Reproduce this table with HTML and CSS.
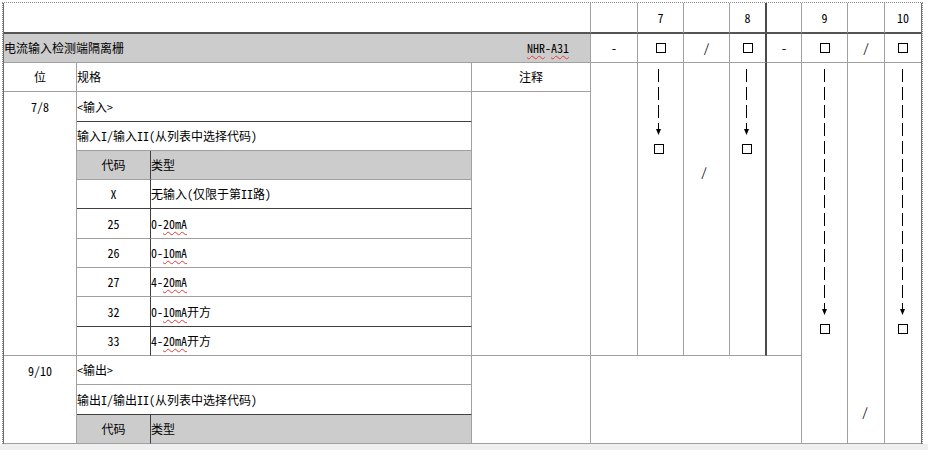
FILE: index.html
```html
<!DOCTYPE html>
<html lang="zh-CN">
<head>
<meta charset="utf-8">
<title>电流输入检测端隔离栅</title>
<link rel="stylesheet" href="styles.css">
</head>
<body>
<div class="sheet">
  <div class="grid">
    <!-- row 1 -->
    <div class="cell s4 top"></div>
    <div class="cell top"></div>
    <div class="cell top c">7</div>
    <div class="cell top"></div>
    <div class="cell top c thick">8</div>
    <div class="cell top"></div>
    <div class="cell top c">9</div>
    <div class="cell top"></div>
    <div class="cell top c last">10</div>

    <!-- row 2 -->
    <div class="cell s4 title"><span>电流输入检测端隔离栅</span><span class="model"><span class="sp">NHR</span>-<span class="sp">A31</span></span></div>
    <div class="cell c">-</div>
    <div class="cell c"><span class="box"></span></div>
    <div class="cell c">/</div>
    <div class="cell c thick"><span class="box"></span></div>
    <div class="cell c">-</div>
    <div class="cell c"><span class="box"></span></div>
    <div class="cell c">/</div>
    <div class="cell c last"><span class="box"></span></div>

    <!-- row 3 -->
    <div class="cell c">位</div>
    <div class="cell s2">规格</div>
    <div class="cell c">注释</div>
    <div class="cell r10"></div>
    <div class="cell r10 flow">
      <svg class="arrow" width="45" height="292" viewBox="0 0 45 292">
        <line x1="20.5" y1="6" x2="20.5" y2="56" stroke="#000" stroke-width="1" stroke-dasharray="13 5"/>
        <line x1="20.5" y1="60" x2="20.5" y2="70" stroke="#000" stroke-width="1"/>
        <polygon points="18,66 23,66 20.5,72" fill="#000"/>
        <rect x="16.5" y="81.5" width="9" height="9" fill="none" stroke="#000" stroke-width="1"/>
      </svg>
    </div>
    <div class="cell r10 flow"><div class="slash slash-a">/</div></div>
    <div class="cell r10 flow thick">
      <svg class="arrow" width="35" height="292" viewBox="0 0 35 292">
        <line x1="16.5" y1="6" x2="16.5" y2="56" stroke="#000" stroke-width="1" stroke-dasharray="13 5"/>
        <line x1="16.5" y1="60" x2="16.5" y2="70" stroke="#000" stroke-width="1"/>
        <polygon points="14,66 19,66 16.5,72" fill="#000"/>
        <rect x="12.5" y="81.5" width="9" height="9" fill="none" stroke="#000" stroke-width="1"/>
      </svg>
    </div>
    <div class="cell r10"></div>
    <div class="cell r13 flow">
      <svg class="arrow" width="45" height="380" viewBox="0 0 45 380">
        <line x1="22.5" y1="6" x2="22.5" y2="236" stroke="#000" stroke-width="1" stroke-dasharray="13 5"/>
        <line x1="22.5" y1="240" x2="22.5" y2="250" stroke="#000" stroke-width="1"/>
        <polygon points="20,246 25,246 22.5,252" fill="#000"/>
        <rect x="18.5" y="261.5" width="9" height="9" fill="none" stroke="#000" stroke-width="1"/>
      </svg>
    </div>
    <div class="cell r13 flow"><div class="slash slash-b">/</div></div>
    <div class="cell r13 flow last">
      <svg class="arrow" width="36" height="380" viewBox="0 0 36 380">
        <line x1="17.5" y1="6" x2="17.5" y2="236" stroke="#000" stroke-width="1" stroke-dasharray="13 5"/>
        <line x1="17.5" y1="240" x2="17.5" y2="250" stroke="#000" stroke-width="1"/>
        <polygon points="15,246 20,246 17.5,252" fill="#000"/>
        <rect x="13.5" y="261.5" width="9" height="9" fill="none" stroke="#000" stroke-width="1"/>
      </svg>
    </div>

    <!-- section 7/8 -->
    <div class="cell r9 pos">7/8</div>
    <div class="cell s2 dark-b">&lt;输入&gt;</div>
    <div class="cell r9"></div>
    <div class="cell s2">输入I/输入II(从列表中选择代码)</div>
    <div class="cell c head code">代码</div>
    <div class="cell head">类型</div>
    <div class="cell c code dark-b">X</div>
    <div class="cell dark-b">无输入(仅限于第II路)</div>
    <div class="cell c code">25</div>
    <div class="cell">0-<span class="sp">20mA</span></div>
    <div class="cell c code">26</div>
    <div class="cell">0-<span class="sp">10mA</span></div>
    <div class="cell c code">27</div>
    <div class="cell">4-<span class="sp">20mA</span></div>
    <div class="cell c code dark-b">32</div>
    <div class="cell dark-b">0-<span class="sp">10mA</span>开方</div>
    <div class="cell c code">33</div>
    <div class="cell">4-<span class="sp">20mA</span>开方</div>

    <!-- section 9/10 -->
    <div class="cell r3 pos">9/10</div>
    <div class="cell s2">&lt;输出&gt;</div>
    <div class="cell r3"></div>
    <div class="cell r3 s5"></div>
    <div class="cell s2 dark-b">输出I/输出II(从列表中选择代码)</div>
    <div class="cell c head code">代码</div>
    <div class="cell head">类型</div>
  </div>
</div>
<div class="strip"></div>
</body>
</html>
```

FILE: styles.css
```css
* {
  box-sizing: border-box;
}

html,
body {
  margin: 0;
  height: 450px;
  overflow: hidden;
  background: #ffffff;
}

body {
  font-family: "Noto Sans Mono CJK SC", "Noto Sans CJK SC", "Liberation Mono", monospace;
  font-size: 12px;
  line-height: 1;
  color: #000000;
}

.sheet {
  margin: 2px 0 0 2px;
  width: 921px;
  border-top: 1px dotted #8c8c8c;
  border-left: 1px dotted #8c8c8c;
  border-right: 1px dotted #8c8c8c;
}

.grid {
  display: grid;
  grid-template-columns: 73px 74px 321px 119px 47px 46px 46px 37px 35px 46px 37px 36px;
  grid-template-rows: 31px 29px 29px 30px 29px 29px 29px 30px 29px 29px 30px 29px 29px 30px 29px;
  border-left: 1px solid #6e6e6e;
  border-right: 1px solid #6e6e6e;
}

.cell {
  display: flex;
  align-items: center;
  border-right: 1px solid #a0a0a0;
  border-bottom: 1px solid #a0a0a0;
  white-space: nowrap;
  overflow: hidden;
  min-width: 0;
}

.c {
  justify-content: center;
}

.s2 { grid-column: span 2; }
.s4 { grid-column: span 4; }
.s5 { grid-column: span 5; }
.r3 { grid-row: span 3; }
.r9 { grid-row: span 9; }
.r10 { grid-row: span 10; }
.r13 { grid-row: span 13; }

.top {
  border-bottom: 2px solid #555555;
}

.thick {
  border-right: 2px solid #4a4a4a;
}

.last {
  border-right: none;
}

.title {
  background: #cccccc;
  justify-content: space-between;
}

.model {
  margin-right: 21px;
}

.head {
  background: #cccccc;
}

.code {
  border-right: 1px solid #404040;
}

.dark-b {
  border-bottom: 1px solid #404040;
}

.pos {
  align-items: flex-start;
  justify-content: center;
  line-height: 30px;
}

.flow {
  display: block;
}

.arrow {
  display: block;
}

.box {
  display: inline-block;
  width: 10px;
  height: 10px;
  border: 1px solid #000000;
}

.slash {
  line-height: 12px;
  text-align: center;
}

.slash-a {
  padding-top: 103px;
  padding-right: 5px;
}

.slash-b {
  padding-top: 343px;
  padding-right: 2px;
}

.sp {
  text-decoration: underline wavy #e23b3b;
  text-decoration-thickness: 1px;
  text-underline-offset: 2px;
  text-decoration-skip-ink: none;
}

.strip {
  height: 6px;
  background: #efefef;
}
```
